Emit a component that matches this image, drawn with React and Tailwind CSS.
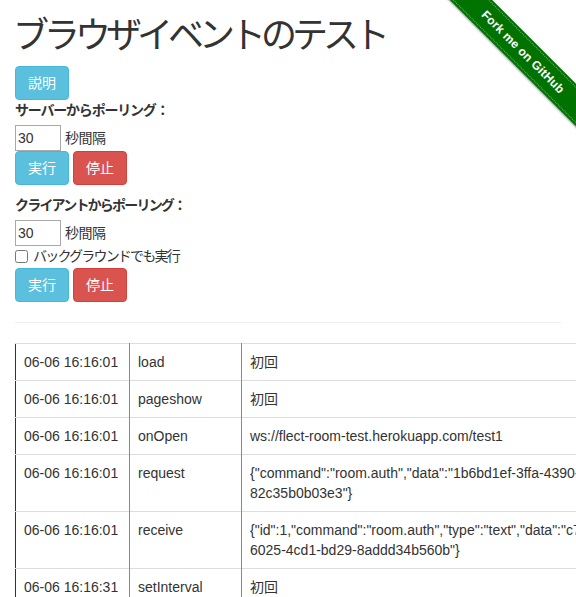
import React from "react";

const rows = [
  { time: "06-06 16:16:01", event: "load", detail: ["初回"] },
  { time: "06-06 16:16:01", event: "pageshow", detail: ["初回"] },
  { time: "06-06 16:16:01", event: "onOpen", detail: ["ws://flect-room-test.herokuapp.com/test1"] },
  {
    time: "06-06 16:16:01",
    event: "request",
    detail: ['{"command":"room.auth","data":"1b6bd1ef-3ffa-4390-a5d1-', '82c35b0b03e3"}'],
  },
  {
    time: "06-06 16:16:01",
    event: "receive",
    detail: ['{"id":1,"command":"room.auth","type":"text","data":"c7a2e8f0-', '6025-4cd1-bd29-8addd34b560b"}'],
  },
  { time: "06-06 16:16:31", event: "setInterval", detail: ["初回"] },
];

function Btn({ color, children }) {
  const styles =
    color === "info"
      ? "bg-[#5bc0de] border-[#46b8da]"
      : "bg-[#d9534f] border-[#d43f3a]";
  return (
    <button className={`${styles} border text-white text-[14px] leading-[20px] px-[12px] py-[6px] rounded-[4px]`}>
      {children}
    </button>
  );
}

function IntervalInput() {
  return (
    <div className="flex items-center gap-[4px] h-[26px]">
      <input
        type="text"
        defaultValue="30"
        className="w-[46px] h-[26px] border border-[#a9a9a9] px-[2px] text-[14px] text-[#333]"
      />
      <span className="tracking-[-0.5px]">秒間隔</span>
    </div>
  );
}

function Ribbon() {
  return (
    <div className="absolute top-0 right-0 w-[149px] h-[149px] overflow-hidden pointer-events-none">
      <div className="absolute left-[-11px] top-[37px] w-[214px] h-[30px] rotate-45 bg-[#007200] shadow-[0_1px_2px_rgba(0,0,0,0.4)] flex items-center justify-center">
        <div className="absolute left-0 right-0 top-[2px] bottom-[2px] border-y border-dotted border-[rgba(255,255,255,0.45)]" />
        <span className="text-white font-bold text-[12px] tracking-[0.2px]">Fork me on GitHub</span>
      </div>
    </div>
  );
}

export default function App() {
  return (
    <div
      className="relative overflow-hidden bg-white text-[#333] text-[14px] leading-[20px] min-h-[597px]"
      style={{ fontFamily: '"Liberation Sans", "Noto Sans CJK JP", sans-serif' }}
    >
      <Ribbon />
      <div className="px-[15px]">
        <h1 className="text-[36px] leading-[40px] pt-[16px] mb-[10px] ml-[-2px] tracking-[-5px] font-normal">
          ブラウザイベントのテスト
        </h1>

        <Btn color="info">説明</Btn>

        <div className="font-bold tracking-[-1.2px] mb-[5px]">サーバーからポーリング：</div>
        <IntervalInput />
        <div className="flex gap-[4px]">
          <Btn color="info">実行</Btn>
          <Btn color="danger">停止</Btn>
        </div>

        <div className="font-bold tracking-[-1.8px] mt-[10px] mb-[5px]">クライアントからポーリング：</div>
        <IntervalInput />
        <label className="flex items-center gap-[5px] h-[20px] mb-[2px]">
          <input type="checkbox" className="w-[13px] h-[13px] m-0" />
          <span className="tracking-[-1.8px]">バックグラウンドでも実行</span>
        </label>
        <div className="flex gap-[4px]">
          <Btn color="info">実行</Btn>
          <Btn color="danger">停止</Btn>
        </div>

        <hr className="mt-[20px] mb-[20px] border-t border-[#eee]" />

        <table className="table-fixed w-[760px] border-collapse border-l border-l-[#333] whitespace-nowrap">
          <colgroup>
            <col className="w-[114px]" />
            <col className="w-[112px]" />
            <col />
          </colgroup>
          <tbody>
            {rows.map((r, i) => (
              <tr key={i} className="border-t border-[#ddd] align-top">
                <td className="px-[8px] py-[8px]">{r.time}</td>
                <td className="px-[8px] py-[8px] border-l border-l-[#888]">{r.event}</td>
                <td className="px-[8px] py-[8px] border-l border-l-[#888]">
                  {r.detail.map((line, j) => (
                    <div key={j}>{line}</div>
                  ))}
                </td>
              </tr>
            ))}
          </tbody>
        </table>
      </div>
    </div>
  );
}
